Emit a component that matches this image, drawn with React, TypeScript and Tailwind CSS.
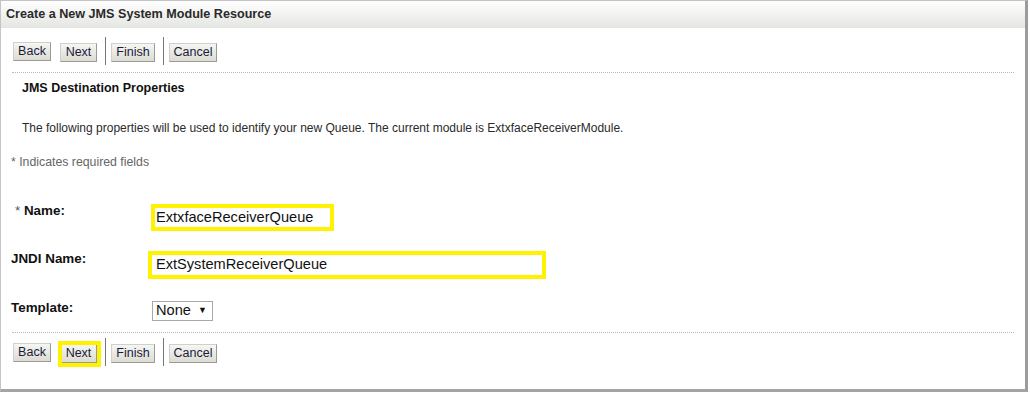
import React from 'react'

const font = { fontFamily: '"Liberation Sans", Arial, sans-serif' }

const widths: Record<string, string> = {
  Back: 'w-[38px]',
  Next: 'w-[37px]',
  Finish: 'w-[44px]',
  Cancel: 'w-[48px]',
}

function Btn({ label, highlight }: { label: string; highlight?: boolean }) {
  return (
    <button
      className={`relative h-[19px] ${widths[label]} border border-[#9a9a9a] border-t-[#cfcfcf] border-l-[#cfcfcf] bg-gradient-to-b from-[#f6f6f2] to-[#dcdcd2] text-center text-[12.5px] leading-[16px] text-[#1a1a40]`}
    >
      {label}
      {/* yellow callout drawn over the button */}
      {highlight && (
        <span className="pointer-events-none absolute -bottom-[5px] -left-[3px] -right-[5px] -top-[4px] border-[4px] border-[#fff200]" />
      )}
    </button>
  )
}

function ButtonBar({ highlightNext }: { highlightNext?: boolean }) {
  return (
    <div className="flex h-[28px] items-center pl-[12px]">
      <Btn label="Back" />
      <div className="ml-[9px]">
        <Btn label="Next" highlight={highlightNext} />
      </div>
      <div className="ml-[8px] h-[28px] w-px bg-[#777]" />
      <div className="ml-[5px]">
        <Btn label="Finish" />
      </div>
      <div className="ml-[8px] h-[28px] w-px bg-[#777]" />
      <div className="ml-[5px]">
        <Btn label="Cancel" />
      </div>
    </div>
  )
}

export default function App() {
  return (
    <div className="h-[394px] w-[1030px] bg-white" style={font}>
      <div className="h-[392px] w-[1028px] border-l border-t border-[#c4c4c4] border-r-[3px] border-b-[3px] border-r-[#9c9c9c] border-b-[#a4a4a4] bg-white">
        {/* Title bar */}
        <div className="flex h-[27px] items-center bg-gradient-to-b from-white to-[#e4e6e2] pl-[5px] text-[12.6px] font-bold text-[#2a2a2a]">
          Create a New JMS System Module Resource
        </div>

        <div className="mt-[9px]">
          <ButtonBar />
        </div>

        <div className="mx-[11px] mt-[7px] border-t border-dotted border-[#b8b8b8]" />

        <div className="mt-[7px] pl-[21px] text-[12.5px] font-bold leading-[16px] text-[#111]">
          JMS Destination Properties
        </div>

        <div className="mt-[24px] pl-[21px] text-[12px] leading-[16px] text-[#2a2a2a]">
          The following properties will be used to identify your new Queue. The current module is ExtxfaceReceiverModule.
        </div>

        <div className="mt-[18px] pl-[10px] text-[12.3px] leading-[16px] text-[#666]">* Indicates required fields</div>

        {/* Form */}
        <div className="mt-[34px] flex flex-col">
          <div className="flex items-start">
            <div className="w-[140px] pl-[14px] text-[13.4px] font-bold leading-[14px] text-[#111]">
              <span className="font-normal text-[#555]">* </span>Name:
            </div>
            <div className="ml-[10px] flex h-[27px] w-[183px] items-center border-[4px] border-[#fff200] pl-[1px] text-[14.6px] text-[#111]">
              ExtxfaceReceiverQueue
            </div>
          </div>

          <div className="mt-[20px] flex items-start">
            <div className="w-[137px] pl-[10px] pt-[1px] text-[13.4px] font-bold leading-[14px] text-[#111]">JNDI Name:</div>
            <div className="ml-[10px] flex h-[28px] w-[398px] items-center border-[4px] border-[#fff200] pl-[4px] text-[14.6px] text-[#111]">
              ExtSystemReceiverQueue
            </div>
          </div>

          <div className="mt-[22px] flex items-start">
            <div className="w-[141px] pl-[10px] text-[13.4px] font-bold leading-[14px] text-[#111]">Template:</div>
            <div className="ml-[10px] flex h-[20px] w-[61px] items-center border border-[#a9a9a9] pl-[3px] text-[14.6px] text-[#111]">
              None
              <span className="ml-[7px] text-[9px]">▼</span>
            </div>
          </div>
        </div>

        <div className="mx-[11px] mt-[11px] border-t border-dotted border-[#b8b8b8]" />

        <div className="mt-[5px]">
          <ButtonBar highlightNext />
        </div>
      </div>
    </div>
  )
}
